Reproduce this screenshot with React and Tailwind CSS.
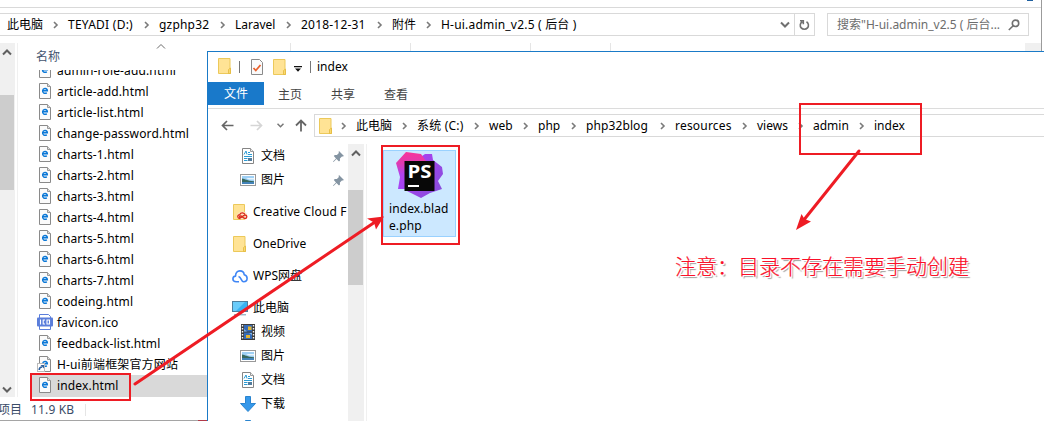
const Chevron = ({ className = "" }) => (
  <svg className={`shrink-0 ${className}`} width="6" height="8" viewBox="0 0 6 8" fill="none" stroke="#7a7a7a" strokeWidth="1.6">
    <path d="M1 1l3 3-3 3" />
  </svg>
);

const Caret = ({ className = "", up = false, color = "#606060", w = 2 }) => (
  <svg className={`shrink-0 ${className}`} width="10" height="7" viewBox="0 0 10 7" fill="none" stroke={color} strokeWidth={w}>
    <path d={up ? "M1 5.5l4-4 4 4" : "M1 1.5l4 4 4-4"} />
  </svg>
);

const Folder = ({ className = "" }) => (
  <svg className={`shrink-0 ${className}`} width="14" height="16" viewBox="0 0 14 16">
    <path d="M.5.5h11.500v10.500l.5 1v3.500H.5z" fill="#ffe395" stroke="#ecc95a" />
    <path d="M10.500 15.500V11.500l2-1.500v5.500z" fill="#f9d96f" stroke="#e3b93f" strokeWidth=".8" />
  </svg>
);

const HtmlIcon = () => (
  <svg width="12" height="16" viewBox="0 0 12 16" className="shrink-0">
    <path d="M.5.5h8l3 3v12H.5z" fill="#fbfbfb" stroke="#8a8a8a" />
    <path d="M8.500.5v3h3" fill="#ddd" stroke="#999" />
    <path d="M3.500 7.800h4.800c0-3-4.100-3.200-4.600-.5-.6 3 2.100 3.600 4.200 2.500" fill="none" stroke="#0b78d7" strokeWidth="1.500" />
  </svg>
);

const IcoIcon = () => (
  <svg width="16" height="16" viewBox="0 0 16 16" className="shrink-0">
    <path d="M2.500 4V.5h9l2 2V4M2.500 12v3.500h11V12" fill="#fff" stroke="#5b7edb" />
    <rect x="0" y="3.500" width="16" height="9" rx="1" fill="#5b7edb" />
    <path d="M3.500 5.500v5M8 6H6.200v4H8M10 6h2.500v4H10z" fill="none" stroke="#fff" strokeWidth="1.100" />
  </svg>
);

const LinkIcon = () => (
  <svg width="14" height="16" viewBox="0 0 14 16" className="-ml-0.5 shrink-0">
    <path d="M2.500.5h8l3 3v12h-11z" fill="#fbfbfb" stroke="#8a8a8a" />
    <path d="M10.500.5v3h3" fill="#ddd" stroke="#999" />
    <path d="M5.500 7.800h4.800c0-3-4.100-3.200-4.600-.5-.6 3 2.100 3.600 4.200 2.500" fill="none" stroke="#0b78d7" strokeWidth="1.500" />
    <rect x=".5" y="7.500" width="7" height="8" fill="#fff" stroke="#bbb" />
    <path d="M2.200 14c0-2 1-3 3-3" fill="none" stroke="#2b5f9e" strokeWidth="1.600" />
    <path d="M3.500 9H7v3.500z" fill="#2b5f9e" />
  </svg>
);

const DocIcon = () => (
  <svg width="16" height="16" viewBox="0 0 16 16" className="shrink-0">
    <path d="M2.500.5h8l3 3v12h-11z" fill="#fff" stroke="#858585" />
    <path d="M10.500.5v3h3" fill="#eee" stroke="#999" />
    <path d="M4 6.500L6 3l1 3.500M8 4.500h2M8 6.500h4M4 8.500h8M4 10.500h3.500M4 12.500h3.500" fill="none" stroke="#2b9bd4" />
    <rect x="8" y="10" width="4" height="3" fill="#537b9b" />
  </svg>
);

const PicIcon = () => (
  <svg width="16" height="12" viewBox="0 0 16 12" className="shrink-0">
    <rect x=".5" y=".5" width="15" height="11" fill="#fff" stroke="#999" />
    <rect x="2" y="2" width="12" height="8" fill="#9fd0f5" />
    <path d="M6 4h8v1.500H9z" fill="#e8f5fd" />
    <path d="M2 4.500c3 .2 5 2.500 12 2.700V8H2z" fill="#38695f" />
    <path d="M2 8h12v2H2z" fill="#4383b9" />
  </svg>
);

const VideoIcon = () => (
  <svg width="14" height="16" viewBox="0 0 14 16" className="shrink-0">
    <path d="M0 0h14v16H0z" fill="#3c3c3c" />
    <path d="M1.500 1v15M12.500 1v15" stroke="#f5f5f5" strokeWidth="1.400" strokeDasharray="1.500 1.500" />
    <path d="M3 1h8v6.500H3zM3 8.500h8V15H3z" fill="#356bb7" />
    <path d="M7 2.500h3.500V6H7zM5 11h4v3H5z" fill="#e5b52f" />
    <path d="M3 5l3 2.500H3zM8 9h3v2z" fill="#7fb5e8" />
  </svg>
);

const PcIcon = () => (
  <svg width="16" height="16" viewBox="0 0 16 16" className="shrink-0">
    <rect x=".5" y="1.500" width="15" height="10" fill="#38b2f2" stroke="#4e7f9d" />
    <path d="M1 2h12L4 11H1z" fill="#6accfa" />
    <path d="M6.500 12h3v2h-3z" fill="#9bbccc" />
    <path d="M2 14.800h12" stroke="#6e9ab0" />
  </svg>
);

const CloudIcon = () => (
  <svg width="16" height="13" viewBox="0 0 16 13" className="shrink-0" fill="none" stroke="#3f86f5" strokeWidth="1.600" strokeLinejoin="round">
    <path d="M7 11.800H4.200C2 11.800.9 10.500.9 9c0-1.700 1.200-2.800 2.700-2.900C3.400 3 5.300.9 7.900.9c2.400 0 4.100 1.600 4.300 3.900 1.800.4 2.900 1.700 2.900 3.500 0 2-1.400 3.500-3.500 3.500C9 11.800 9.500 7 6.500 6.500" />
  </svg>
);

const CreativeIcon = () => (
  <svg width="15" height="16" viewBox="0 0 15 16" className="shrink-0">
    <path d="M.5.5h11v15H.5z" fill="#ffe395" stroke="#ecc95a" />
    <ellipse cx="9.300" cy="11.500" rx="5" ry="4" fill="#fbe3c0" />
    <path d="M7.500 14.500c-3.500.3-3.500-3.700-.8-3.800 1-2.700 4.800-2.500 5.300.3 2.600.2 2.200 3.500.2 3.500-2.200 0-2.700-2.500-4.700-2.500-1.300 0-1.300 1.700 0 1.700 1.700 0 2-2.200 4-2.200" fill="none" stroke="#da2c1c" strokeWidth="1.300" />
  </svg>
);

const DownIcon = () => (
  <svg width="16" height="16" viewBox="0 0 16 16" className="shrink-0">
    <path d="M5.500.5h5v7h5L8 15.500.5 7.500h5z" fill="#3598ea" stroke="#2a84cf" />
  </svg>
);

const Pin = () => (
  <svg width="11" height="11" viewBox="0 0 11 11" className="shrink-0">
    <path d="M6 0l5 5-1.200.6-.9-.2-2 2 .1 2.100L6 10.500 3.500 8 .5 11 0 10.500 3 7.500.8 5l1-1 2.100.1 2-2L5.600 1z" fill="#8494a2" />
  </svg>
);

const PhpStorm = () => (
  <svg width="48" height="48" viewBox="0 0 48 48" className="shrink-0">
    <defs>
      <linearGradient id="pink" x1="0" y1="0" x2="0" y2="1">
        <stop offset="0" stopColor="#f8359a" />
        <stop offset=".3" stopColor="#e03bb0" />
        <stop offset=".6" stopColor="#b142ee" />
        <stop offset="1" stopColor="#a445f5" />
      </linearGradient>
      <linearGradient id="violet" x1="0" y1="0" x2="1" y2="1">
        <stop offset="0" stopColor="#b33cf5" />
        <stop offset="1" stopColor="#8350d9" />
      </linearGradient>
    </defs>
    <path d="M20 9L29 3l7 0 1 6 9 7 1 7-5 7 4 8-12 4-9 5-14-7z" fill="url(#violet)" />
    <path d="M0 12L10 1l15 2 5 7-18 28-10 0 2-12z" fill="url(#pink)" />
    <path d="M8.500 10h30v30h-30z" fill="#080808" />
    <path d="M12 35h11" stroke="#fff" strokeWidth="2" />
    <text x="11.500" y="26.500" fill="#fff" fontFamily="Open Sans" fontWeight="700" fontSize="18" textLength="24" lengthAdjust="spacingAndGlyphs">PS</text>
  </svg>
);

const outerPath = [
  ["此电脑", "w-[61px]"],
  ["TEYADI (D:)", "w-[91px] tracking-[0.25px]"],
  ["gzphp32", "w-[76px] tracking-[0.2px]"],
  ["Laravel", "w-[66px]"],
  ["2018-12-31", "w-[91px] tracking-[0.2px]"],
  ["附件", "w-[49px]"],
];

const innerPath = [
  ["此电脑", "w-[61px]"],
  ["系统 (C:)", "w-[72px] tracking-[0.2px]"],
  ["web", "w-[49px]"],
  ["php", "w-[48px]"],
  ["php32blog", "w-[89px] tracking-[0.1px]"],
  ["resources", "w-[82px] tracking-[0.2px]"],
  ["views", "w-[56px]"],
  ["admin", "w-[61px]"],
];

const files = [
  "admin-role-add.html",
  "article-add.html",
  "article-list.html",
  "change-password.html",
  "charts-1.html",
  "charts-2.html",
  "charts-3.html",
  "charts-4.html",
  "charts-5.html",
  "charts-6.html",
  "charts-7.html",
  "codeing.html",
  "favicon.ico",
  "feedback-list.html",
  "H-ui前端框架官方网站",
  "index.html",
];

const Crumbs = ({ items, last }) => (
  <div className="flex items-center whitespace-nowrap">
    {items.map(([label, width]) => (
      <div key={label} className={`flex shrink-0 items-center justify-between pr-[9px] ${width}`}>
        <span>{label}</span>
        <Chevron />
      </div>
    ))}
    <span>{last}</span>
  </div>
);

const FileIcon = ({ name }) => {
  if (name.endsWith(".ico")) return <IcoIcon />;
  if (name.endsWith(".html")) return <HtmlIcon />;
  return <LinkIcon />;
};

const NavItem = ({ icon, label, level = 0, pinned = false, className = "h-6" }) => (
  <div className={`flex shrink-0 items-center ${level ? "pl-8" : "pl-6"} ${className}`}>
    <span className={`flex shrink-0 items-center ${level ? "w-[21px] justify-center pr-[5px]" : "w-[21px] pl-px"}`}>{icon}</span>
    <span className="grow overflow-hidden whitespace-nowrap">{label}</span>
    {pinned && <span className="pr-1"><Pin /></span>}
  </div>
);

const BackWindow = () => (
  <div className="flex h-full w-[1042px] flex-col border-r border-[#9b9b9b]">
    <div className="flex h-2 shrink-0 items-start justify-end overflow-hidden border-b border-[#d9d9d9] pr-2">
      <span className="h-px w-1.5 bg-[#1f5f9f]" />
    </div>
    <div className="mt-[5px] flex h-[23px] shrink-0">
      <div className="flex w-[815px] border-y border-r border-[#d9d9d9] pl-[7px]">
        <Crumbs items={outerPath} last={<span className="tracking-[0.2px]">H-ui.admin_v2.5 ( 后台 )</span>} />
        <div className="ml-auto flex items-center">
          <Caret className="mr-1" color="#707070" />
          <div className="flex h-full w-5 items-center justify-center border-l border-[#d9d9d9]">
            <svg width="11" height="12" viewBox="0 0 11 12" fill="none" stroke="#707070" strokeWidth="1.600">
              <path d="M7.500 2.700a4.100 4.100 0 1 1-4.300 0M1 1.800h3.300v3.400" />
            </svg>
          </div>
        </div>
      </div>
      <div className="ml-3 flex w-[202px] items-center justify-between border border-[#d9d9d9] pr-2 pl-[9px] text-[#6d6d6d]">
        <span className="whitespace-nowrap">搜索"H-ui.admin_v2.5 ( 后台...</span>
        <svg width="12" height="12" viewBox="0 0 12 12" fill="none" stroke="#707070" strokeWidth="1.600">
          <circle cx="7.500" cy="4.300" r="3.200" />
          <path d="M5.200 6.700L.8 11" />
        </svg>
      </div>
    </div>
    <div className="mt-[7px] flex h-[354px] shrink-0">
      <div className="flex w-[15px] shrink-0 flex-col items-center bg-[#f0f0f0]">
        <Caret up className="mt-1.5 mr-0.5" />
        <div className="mt-[39px] mr-px h-[95px] w-3.5 bg-[#cdcdcd]" />
        <Caret className="mt-auto mr-0.5 mb-1" />
      </div>
      <div className="ml-0.5 flex w-[191px] flex-col border-l border-[#f0f0f0]">
        <div className="flex h-[27px] shrink-0 items-end pl-[18px] text-[#44546f]">
          <span className="w-[120px] leading-[27px]">名称</span>
          <Caret up className="mb-5" color="#6b6b6b" w={1} />
        </div>
        <div className="flex h-[327px] flex-col justify-end overflow-hidden">
          {files.map((name) => (
            <div key={name} className={`ml-3.5 flex shrink-0 items-center ${name === "index.html" ? "h-[22px] bg-[#d9d9d9] pb-px" : "h-[21px]"}`}>
              <span className="flex w-[25px] shrink-0 items-center justify-center pb-px"><FileIcon name={name} /></span>
              <span className="tracking-[0.15px] whitespace-nowrap">{name}</span>
            </div>
          ))}
        </div>
      </div>
      <div className="flex h-2 grow">
        <span className="w-[83px] border-r border-[#e5e5e5]" />
        <span className="w-[120px] border-r border-[#e5e5e5]" />
        <span className="w-[120px] border-r border-[#e5e5e5]" />
        <span className="w-20 border-r border-[#e5e5e5]" />
        <span className="ml-auto w-4 bg-[#f0f0f0]" />
      </div>
    </div>
    <div className="flex h-[22px] shrink-0 items-center pt-[3px] text-[#3a4c68]">
      <span className="w-[31px] -indent-[2px]">项目</span>
      <span className="w-[54px] tracking-[0.15px]">11.9 KB</span>
      <span className="h-3 w-px bg-[#e5e5e5]" />
    </div>
    <div className="mt-px flex h-px shrink-0 bg-[#a5a5a5]">
      <span className="ml-[198px] w-2.5 bg-[#b23a48]" />
    </div>
  </div>
);

const FrontWindow = () => (
  <div className="absolute top-[51px] left-[207px] flex h-[370px] w-[837px] flex-col overflow-hidden border-t border-l border-[#1a7ac7] bg-white">
    <div className="flex h-[30px] shrink-0 items-center pl-2.5">
      <Folder className="-mt-0.5" />
      <span className="ml-[7px] h-3 w-px bg-[#777]" />
      <svg className="ml-[11px]" width="12" height="16" viewBox="0 0 12 16" fill="none">
        <path d="M.5.5h8l3 3v12H.5z" fill="#fafafa" stroke="#8a8a8a" />
        <path d="M2.500 9l2.300 2.500L9.500 6" stroke="#e8602c" strokeWidth="1.800" />
      </svg>
      <Folder className="ml-2.5" />
      <svg className="mt-1 ml-[7px]" width="8" height="6" viewBox="0 0 8 6">
        <path d="M0 0h8v1.200H0zM1 2.500h6L4 5.800z" fill="#111" />
      </svg>
      <span className="ml-2 h-3 w-px bg-[#777]" />
      <span className="ml-1.5">index</span>
    </div>
    <div className="flex h-[27px] shrink-0 border-b border-[#dcdcdc] text-[#444]">
      <span className="flex h-[23px] w-14 items-center justify-center bg-[#1979ca] text-white">文件</span>
      <span className="ml-3.5 flex h-[25px] w-[53px] items-center">主页</span>
      <span className="flex h-[25px] w-[53px] items-center">共享</span>
      <span className="flex h-[25px] items-center">查看</span>
    </div>
    <div className="mt-[5px] flex h-[23px] shrink-0 items-center">
      <svg className="ml-[13px]" width="13" height="11" viewBox="0 0 13 11" fill="none" stroke="#666" strokeWidth="1.700">
        <path d="M12.500 5.500H1.500M6 1L1.500 5.500 6 10" />
      </svg>
      <svg className="ml-4" width="13" height="11" viewBox="0 0 13 11" fill="none" stroke="#d5d5d5" strokeWidth="1.700">
        <path d="M.5 5.500h11M7 1l4.500 4.500L7 10" />
      </svg>
      <svg className="ml-[14px]" width="7" height="5" viewBox="0 0 7 5" fill="none" stroke="#777" strokeWidth="1.500">
        <path d="M.5.8l3 3 3-3" />
      </svg>
      <svg className="ml-[11px]" width="12" height="13" viewBox="0 0 12 13" fill="none" stroke="#666" strokeWidth="1.800">
        <path d="M6 12.500V1.500M1 6.500l5-5 5 5" />
      </svg>
      <div className="ml-[7px] flex h-full grow items-center border-y border-l border-[#d9d9d9] pl-1">
        <Folder />
        <Chevron className="mr-[9px] ml-2" />
        <Crumbs items={innerPath} last="index" />
      </div>
    </div>
    <div className="mt-[7px] flex h-[278px] shrink-0">
      <div className="flex w-[140px] shrink-0 flex-col">
        <NavItem icon={<DocIcon />} label="文档" level={1} pinned />
        <NavItem icon={<PicIcon />} label="图片" level={1} pinned />
        <NavItem icon={<CreativeIcon />} label={<span className="tracking-[0.15px]">Creative Cloud F</span>} className="mt-2 h-6" />
        <NavItem icon={<Folder />} label="OneDrive" className="mt-2 h-6" />
        <NavItem icon={<span className="-ml-px"><CloudIcon /></span>} label="WPS网盘" className="mt-2 h-6" />
        <NavItem icon={<span className="-ml-px"><PcIcon /></span>} label="此电脑" className="mt-2 h-6" />
        <NavItem icon={<VideoIcon />} label="视频" level={1} />
        <NavItem icon={<PicIcon />} label="图片" level={1} />
        <NavItem icon={<DocIcon />} label="文档" level={1} />
        <NavItem icon={<DownIcon />} label="下载" level={1} />
        <NavItem icon={<DownIcon />} label="" level={1} />
      </div>
      <div className="flex w-4 flex-col items-center bg-[#f0f0f0]">
        <Caret up className="mt-1.5 mr-px" />
        <div className="mt-[33px] mr-px h-[95px] w-[15px] bg-[#cdcdcd]" />
      </div>
      <div className="ml-0.5 flex grow items-start border-l border-[#f0f0f0] pt-1.5 pl-4">
        <div className="flex h-[87px] w-[73px] flex-col items-center border border-[#99d1ff] bg-[#cce8ff]">
          <PhpStorm />
          <div className="mt-px w-full pl-[5px] leading-[17px] tracking-[0.1px]">index.blad<br />e.php</div>
        </div>
      </div>
    </div>
  </div>
);

const Annotations = () => (
  <>
    <svg className="absolute inset-0" width="1044" height="421" viewBox="0 0 1044 421" fill="none" stroke="#ee1c24">
      <g strokeWidth="2">
        <rect x="31" y="374" width="99" height="26" />
        <rect x="382" y="146" width="77" height="98" />
        <rect x="800" y="104" width="121" height="50" />
      </g>
      <g strokeWidth="3" strokeLinecap="round">
        <path d="M135 384L375 222" />
        <path d="M859 151L803 221" />
      </g>
      <path d="M384 216.500l-8 13-2-7-7-4z" fill="#ee1c24" stroke="none" />
      <path d="M796 230l5.500-16 3 5 6.500 2.500z" fill="#ee1c24" stroke="none" />
    </svg>
    <p className="absolute top-[251px] left-[675px] font-['Noto_Sans_CJK_SC',sans-serif] text-[21px] leading-7 font-light whitespace-nowrap text-[#fa0f28] [-webkit-text-stroke:0.2px_#fa0f28] [text-shadow:-1px_-1px_0_#fff,1px_-1px_0_#fff,-1px_1px_0_#fff,1px_1px_0_#fff,2px_2px_1px_#999]">
      注意：目录不存在需要手动创建
    </p>
  </>
);

export default function App() {
  return (
    <div className="relative h-[421px] w-[1044px] overflow-hidden bg-white font-['Noto_Sans','Noto_Sans_CJK_SC',sans-serif] text-[12px] leading-4 text-black">
      <BackWindow />
      <FrontWindow />
      <Annotations />
    </div>
  );
}
